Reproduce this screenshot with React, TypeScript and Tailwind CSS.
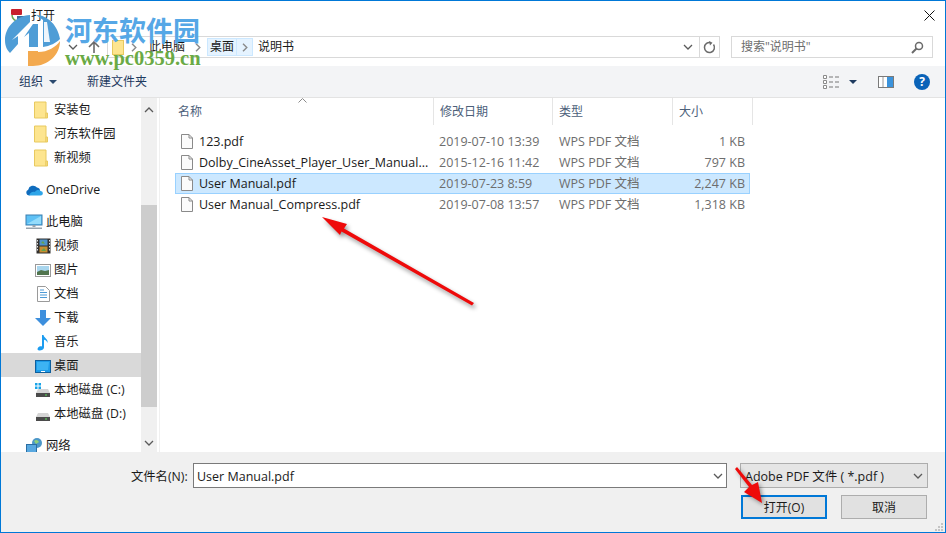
import React from "react";

const F = { fontFamily: '"Open Sans","Noto Sans CJK SC",sans-serif' };

function Folder() {
  return (
    <svg width="16" height="18" viewBox="0 0 16 18" className="-translate-x-[1px]">
      <path d="M.5 1h11.500v16H.5z" fill="#fde58f" stroke="#e8c95f" />
      <path d="M12 12h1.500v5H12z" fill="#fde58f" stroke="#e8c95f" />
    </svg>
  );
}
function Cloud() {
  return (
    <svg width="18" height="12" viewBox="0 0 18 12">
      <path d="M4 11.500a3 3 0 0 1-.8-5.800A5 5 0 0 1 12 3.600a3.600 3.600 0 0 1 3 4z" fill="#0f6cbd" />
      <path d="M4 11.500h11.500a2.300 2.300 0 0 0 .2-4.600C14 5.500 11 6 10 8c-2-1-5 0-6 3.500z" fill="#2ea5e8" />
    </svg>
  );
}
function Monitor() {
  return (
    <svg width="18" height="16" viewBox="0 0 18 16">
      <rect x="1" y="1" width="16" height="10" fill="#5ec1f5" stroke="#3a7fb0" />
      <path d="M2 10l14-8v8z" fill="#94dcfb" />
      <rect x="7.500" y="11" width="3" height="2" fill="#98a4ad" />
      <rect x="1" y="13.500" width="16" height="1.500" fill="#98a4ad" />
    </svg>
  );
}
function Video() {
  return (
    <svg width="15" height="16" viewBox="0 0 15 16">
      <rect x="0.500" y="0.500" width="14" height="15" fill="#33302e" />
      <rect x="3.500" y="1.500" width="8" height="6" fill="#4f93c9" />
      <rect x="3.500" y="8.500" width="8" height="6" fill="#c68e32" />
      <path d="M5 5l2-2 2 3zM5 13l3-3 2 3z" fill="#64a34a" />
      <path d="M1.500 2v1.500M1.500 5v1.500M1.500 8v1.500M1.500 11v1.500M13.500 2v1.500M13.500 5v1.500M13.500 8v1.500M13.500 11v1.500" stroke="#ddd" />
    </svg>
  );
}
function Picture() {
  return (
    <svg width="16" height="13" viewBox="0 0 16 13">
      <rect x="0.500" y="0.500" width="15" height="12" fill="#fff" stroke="#9a9a9a" />
      <rect x="2" y="2" width="12" height="9" fill="#a9d6ee" />
      <path d="M2 8l4-2 4 1 4-1v5H2z" fill="#51754e" />
    </svg>
  );
}
function DocIcon() {
  return (
    <svg width="13" height="16" viewBox="0 0 13 16">
      <path d="M.5.500h8l4 4v11H.5z" fill="#fff" stroke="#9a9a9a" />
      <path d="M3 4h4M3 6.500h7M3 9h7M3 11.500h7" stroke="#4d9ad6" />
    </svg>
  );
}
function Down() {
  return (
    <svg width="16" height="16" viewBox="0 0 16 16">
      <path d="M5 0h6v8h5l-8 8-8-8h5z" fill="#3d8fdd" />
    </svg>
  );
}
function Note() {
  return (
    <svg width="12" height="17" viewBox="0 0 12 17">
      <path d="M5 1h1.500c.5 3 5 4 4 8-.5-2-2-3-3.500-3.300V13.500C7 15.500 4.500 16.500 2.500 16.500 .5 16.500 0 15 1 13.700 2 12.500 4 12 5 12.500z" fill="#1c9cf0" />
    </svg>
  );
}
function Desktop() {
  return (
    <svg width="16" height="13" viewBox="0 0 16 13">
      <rect x="0.500" y="0.500" width="15" height="12" fill="#1d9be8" stroke="#0f5f9c" />
      <path d="M2 2h12l-1 8H2z" fill="#3db3f3" />
      <rect x="6" y="11" width="4" height="1" fill="#fff" />
    </svg>
  );
}
function Drive({ win }: { win?: boolean }) {
  return (
    <svg width="16" height="15" viewBox="0 0 16 15">
      {win && <path d="M0 0h2.500v2.500H0zM3.500 0H6v2.500H3.500zM0 3.500h2.500V6H0zM3.500 3.500H6V6H3.500z" fill="#19a3e8" />}
      <path d="M3 6h10l2 4H1z" fill="#d5d5d5" />
      <rect x="1" y="10" width="14" height="4" fill="#4b4b4b" />
      <rect x="10" y="11.500" width="2" height="1" fill="#5be05b" />
    </svg>
  );
}
function Net() {
  return (
    <svg width="17" height="16" viewBox="0 0 17 16">
      <circle cx="11" cy="5" r="5" fill="#4c97c8" />
      <path d="M8 3c2-2 4-1 5 1l-3 2z" fill="#8fd078" />
      <rect x="0.500" y="6.500" width="10" height="8" fill="#58a8e0" stroke="#2a6ea3" />
    </svg>
  );
}
function FileIcon() {
  return (
    <svg width="12" height="15" viewBox="0 0 12 15">
      <path d="M.5.500h7.500l3.500 3.500v10.500H.5z" fill="#fbfbfb" stroke="#8a8a8a" />
      <path d="M8 .5v3.500h3.500" fill="none" stroke="#8a8a8a" />
    </svg>
  );
}
function Chev({ className = "", color = "#5a5a5a" }: { className?: string; color?: string }) {
  return (
    <svg width="10" height="6" viewBox="0 0 10 6" className={className}>
      <path d="M1 1l4 4 4-4" fill="none" stroke={color} strokeWidth="1.300" />
    </svg>
  );
}
function Crumb() {
  return (
    <svg width="6" height="9" viewBox="0 0 6 9">
      <path d="M1 .8L4.800 4.500 1 8.200" fill="none" stroke="#8a8a8a" strokeWidth="1.400" />
    </svg>
  );
}

function NavRow({ icon, label, indent, active, className = "" }: { icon: React.ReactNode; label: string; indent?: boolean; active?: boolean; className?: string }) {
  return (
    <div className={`h-6 pt-[2px] flex items-center shrink-0 text-[12.300px] text-[#1a1a1a] ${active ? "bg-[#d9d9d9]" : ""} ${className}`}>
      <div className={`flex items-center justify-center w-5 shrink-0 ${indent ? "ml-[32px]" : "ml-[23px]"}`}>{icon}</div>
      <span className={indent ? "ml-[1px]" : "ml-[2px]"}>{label}</span>
    </div>
  );
}

const files = [
  { n: "123.pdf", d: "2019-07-10 13:39", s: "1 KB" },
  { n: "Dolby_CineAsset_Player_User_Manual...", d: "2015-12-16 11:42", s: "797 KB" },
  { n: "User Manual.pdf", d: "2019-07-23 8:59", s: "2,247 KB", sel: true },
  { n: "User Manual_Compress.pdf", d: "2019-07-08 13:57", s: "1,318 KB" },
];

export default function App() {
  return (
    <div style={F} className="relative w-[946px] h-[533px] overflow-hidden bg-white border border-[#0078d7] flex flex-col text-[12px]">
      {/* title */}
      <div className="h-[35px] shrink-0 flex items-center pb-[6px] pl-[9px] pr-[10px]">
        <svg width="16" height="14" viewBox="0 0 16 14">
          <rect x="1" y="0" width="11" height="6" rx="1" fill="#c8202c" />
          <path d="M2 6a6 6 0 0 0 7 6" fill="none" stroke="#6aa84f" strokeWidth="1.500" />
          <rect x="7" y="7" width="8" height="6" fill="#3d6f9c" />
        </svg>
        <span className="ml-[5px] text-[#1a1a1a]">打开</span>
        <svg width="11" height="11" viewBox="0 0 11 11" className="ml-auto">
          <path d="M.5.500l10 10M10.500.500l-10 10" stroke="#111" strokeWidth="1" />
        </svg>
      </div>
      {/* address */}
      <div className="h-[22px] shrink-0 mb-2 flex items-center">
        <div className="w-[77px] shrink-0 flex justify-end">
          <Chev />
        </div>
        <svg width="14" height="14" viewBox="0 0 14 14" className="ml-[9px]">
          <path d="M7 13V2M2 7l5-5 5 5" fill="none" stroke="#6a6a6a" strokeWidth="1.600" />
        </svg>
        <div className="ml-[6px] w-[613px] h-full border border-[#d9d9d9] flex items-center">
          <div className="ml-[4px] w-[12px] h-[15px] bg-[#fde58f] border border-[#e8c95f]" />
          <div className="ml-[7px]"><Crumb /></div>
          <span className="ml-[12px] text-[#1a1a1a]">此电脑</span>
          <div className="ml-[10px]"><Crumb /></div>
          <div className="ml-[6px] h-[18px] flex items-stretch border border-[#cce8ff] bg-[#e5f3ff]">
            <span className="px-[2px] flex items-center text-[#1a1a1a]">桌面</span>
            <div className="w-[16px] border-l border-[#cce8ff] flex items-center justify-center"><Crumb /></div>
          </div>
          <span className="ml-[5px] text-[#1a1a1a]">说明书</span>
          <div className="ml-auto w-[22px] flex justify-center"><Chev /></div>
          <div className="w-[20px] h-full border-l border-[#d9d9d9] flex items-center justify-center">
            <svg width="13" height="13" viewBox="0 0 13 13">
              <path d="M10.500 3.500a5 5 0 1 1-2.500-1.800" fill="none" stroke="#6a6a6a" strokeWidth="1.500" />
              <path d="M6 0l3.500 1.800L7 4.500z" fill="#6a6a6a" />
            </svg>
          </div>
        </div>
        <div className="ml-[11px] w-[202px] h-full border border-[#d9d9d9] flex items-center pl-[9px] pr-[8px] text-[#6d6d6d]">
          <span>搜索"说明书"</span>
          <svg width="13" height="13" viewBox="0 0 13 13" className="ml-auto">
            <circle cx="8" cy="5" r="3.500" fill="none" stroke="#6a6a6a" strokeWidth="1.500" />
            <path d="M5.500 7.500L1 12" stroke="#6a6a6a" strokeWidth="2" />
          </svg>
        </div>
      </div>
      {/* toolbar */}
      <div className="h-[32px] shrink-0 bg-[#f3f4f6] border-b border-[#e3e3e3] flex items-center pl-[18px] text-[#1e3a5f]">
        <span>组织</span>
        <svg width="8" height="4" viewBox="0 0 8 4" className="ml-[6px]"><path d="M0 0h8L4 4z" fill="#2b4a6f" /></svg>
        <span className="ml-[30px]">新建文件夹</span>
        <svg width="17" height="14" viewBox="0 0 17 14" className="ml-[676px]">
          <path d="M.5.500h3v3h-3zM.5 5.500h3v3h-3zM.5 10.500h3v3h-3z" fill="#fff" stroke="#8a8a8a" />
          <path d="M6 2h4M12 2h4M6 7h4M12 7h4M6 12h4M12 12h4" stroke="#777" />
        </svg>
        <svg width="8" height="4" viewBox="0 0 8 4" className="ml-[9px]"><path d="M0 0h8L4 4z" fill="#1e3a5f" /></svg>
        <svg width="16" height="12" viewBox="0 0 16 12" className="ml-[21px]">
          <rect x="0.500" y="0.500" width="15" height="11" fill="#fff" stroke="#7a7a7a" />
          <rect x="9" y="1" width="6" height="10" fill="#3b93dc" />
          <path d="M5 1v10" stroke="#9a9a9a" />
        </svg>
        <div className="ml-[20px] w-4 h-4 rounded-full bg-[#0a63b8] text-white flex items-center justify-center text-[12px] font-bold">?</div>
      </div>
      {/* main */}
      <div className="h-[354px] shrink-0 flex overflow-hidden">
        <div className="w-[140px] shrink-0 flex flex-col -mt-px">
          <NavRow indent icon={<Folder />} label="安装包" />
          <NavRow indent icon={<Folder />} label="河东软件园" />
          <NavRow indent icon={<Folder />} label="新视频" />
          <NavRow className="mt-2" icon={<Cloud />} label="OneDrive" />
          <NavRow className="mt-2" icon={<Monitor />} label="此电脑" />
          <NavRow indent icon={<Video />} label="视频" />
          <NavRow indent icon={<Picture />} label="图片" />
          <NavRow indent icon={<DocIcon />} label="文档" />
          <NavRow indent icon={<Down />} label="下载" />
          <NavRow indent icon={<Note />} label="音乐" />
          <NavRow indent active icon={<Desktop />} label="桌面" />
          <NavRow indent icon={<Drive win />} label="本地磁盘 (C:)" />
          <NavRow indent icon={<Drive />} label="本地磁盘 (D:)" />
          <NavRow className="mt-2" icon={<Net />} label="网络" />
        </div>
        {/* scrollbar */}
        <div className="w-[16px] shrink-0 bg-[#f0f0f0] flex flex-col items-center">
          <div className="h-[24px] flex items-center"><Chev className="rotate-180" /></div>
          <div className="h-[83px]" />
          <div className="w-full h-[202px] bg-[#cdcdcd]" />
          <div className="flex-1 flex items-end pb-[6px]"><Chev /></div>
        </div>
        {/* list */}
        <div className="flex-1 ml-[2px] border-l border-[#f0f0f0] flex flex-col">
          <div className="h-[27px] shrink-0 flex text-[#4c607a] relative">
            <div className="w-[274px] pl-[18px] flex items-center border-r border-[#e5e5e5]">名称</div>
            <div className="w-[119px] pl-[6px] flex items-center border-r border-[#e5e5e5]">修改日期</div>
            <div className="w-[120px] pl-[6px] flex items-center border-r border-[#e5e5e5]">类型</div>
            <div className="w-[80px] pl-[6px] flex items-center border-r border-[#e5e5e5]">大小</div>
            <svg width="9" height="5" viewBox="0 0 9 5" className="absolute left-[138px] top-0">
              <path d="M.5 4.500l4-4 4 4" fill="none" stroke="#8a8a8a" />
            </svg>
          </div>
          <div className="mt-[6px] ml-[15px] w-[575px] text-[12.500px]">
            {files.map((f) => (
              <div key={f.n} className={`h-[21px] pt-[2px] flex items-center border ${f.sel ? "bg-[#cce8ff] border-[#99d1ff]" : "border-transparent"}`}>
                <div className="ml-[5px] w-[12px] flex -translate-y-[1px]"><FileIcon /></div>
                <div className="ml-[6px] w-[240px] text-[#1a1a1a] whitespace-nowrap">{f.n}</div>
                <div className="w-[120px] text-[#6d6d6d] whitespace-nowrap">{f.d}</div>
                <div className="w-[100px] text-[#6d6d6d] whitespace-nowrap">WPS PDF 文档</div>
                <div className="flex-1 pr-[4px] text-right text-[#6d6d6d] whitespace-nowrap">{f.s}</div>
              </div>
            ))}
          </div>
        </div>
      </div>
      {/* bottom */}
      <div className="flex-1 bg-[#f0f0f0] relative flex flex-col pt-[11px]">
        <div className="flex items-center h-[25px]">
          <span className="ml-[130px] w-[62px] pt-[3px] text-[12.300px] text-[#1a1a1a] whitespace-nowrap">文件名(N):</span>
          <div className="w-[534px] h-full bg-white border border-[#7a7a7a] flex items-center pl-[3px] pr-[3px] text-[12.500px] text-[#1a1a1a]">
            <span className="pt-[3px]">User Manual.pdf</span>
            <Chev className="ml-auto" />
          </div>
          <div className="ml-[13px] w-[188px] h-full bg-[#e5e5e5] border border-[#adadad] flex items-center pl-[4px] pr-[4px] text-[12.500px] text-[#1a1a1a]">
            <span className="pt-[3px]">Adobe PDF 文件 ( *.pdf )</span>
            <Chev className="ml-auto" />
          </div>
        </div>
        <div className="flex mt-[7px] pl-[740px]">
          <div className="w-[86px] h-[24px] pt-[2px] bg-[#e1e1e1] border-2 border-[#0078d7] flex items-center justify-center text-[#1a1a1a]">打开(O)</div>
          <div className="ml-[14px] w-[86px] h-[24px] pt-[2px] bg-[#e1e1e1] border border-[#adadad] flex items-center justify-center text-[#1a1a1a]">取消</div>
        </div>
        <svg width="8" height="8" viewBox="0 0 8 8" className="absolute right-[2px] bottom-[1px]">
          <path d="M6 0h2v2H6zM3 3h2v2H3zM6 3h2v2H6zM0 6h2v2H0zM3 6h2v2H3zM6 6h2v2H6z" fill="#c4c4c4" />
        </svg>
      </div>

      {/* watermark logo */}
      <svg width="946" height="70" viewBox="0 0 946 70" className="absolute left-[-1px] top-[-1px] pointer-events-none">
        <path d="M30 15C15 16 5 28 5 40c0 6 2 10 5 13l8-9v-8l-6 4L30 22z" fill="#4f9dd6" />
        <path d="M33 24h5v23h-9V33l-5 4z" fill="#4f9dd6" />
        <path d="M36 15c12 0 22 11 24 24-4 4-10 7-17 8V20z" fill="#4f9dd6" />
        <path d="M60 41c0 14-12 25-27 25h-5V51h10v1c10 0 18-5 22-11z" fill="#f3a94e" />
        <path d="M44 22h3l3 20h-6z" fill="#fff" opacity=".9" />
      </svg>
      <div className="absolute left-[64px] top-[13px] text-[27px] leading-[32px] font-bold text-[#55a7e6] whitespace-nowrap" style={{ fontFamily: '"Noto Sans CJK SC",sans-serif' }}>河东软件园</div>
      <div className="absolute left-[64px] top-[45px] text-[20.500px] leading-[24px] font-bold text-[#6aaa45] whitespace-nowrap" style={{ fontFamily: '"Liberation Serif",serif' }}>www.pc0359.cn</div>

      {/* annotations */}
      <svg width="946" height="533" viewBox="0 0 946 533" className="absolute left-[-1px] top-[-1px] pointer-events-none">
        <path className="drop-shadow-[2px_3px_2px_rgba(0,0,0,0.4)]" d="M322 217L347 224 344 228.500 474 303 472 305.500 341.500 231.500 340 235z" fill="#ee0a0a" />
        <path className="drop-shadow-[2px_2px_2px_rgba(0,0,0,0.4)]" d="M735 469L737 467 752 485 758 482 762 503 744 492 749 487z" fill="#ee0a0a" />
      </svg>
    </div>
  );
}
